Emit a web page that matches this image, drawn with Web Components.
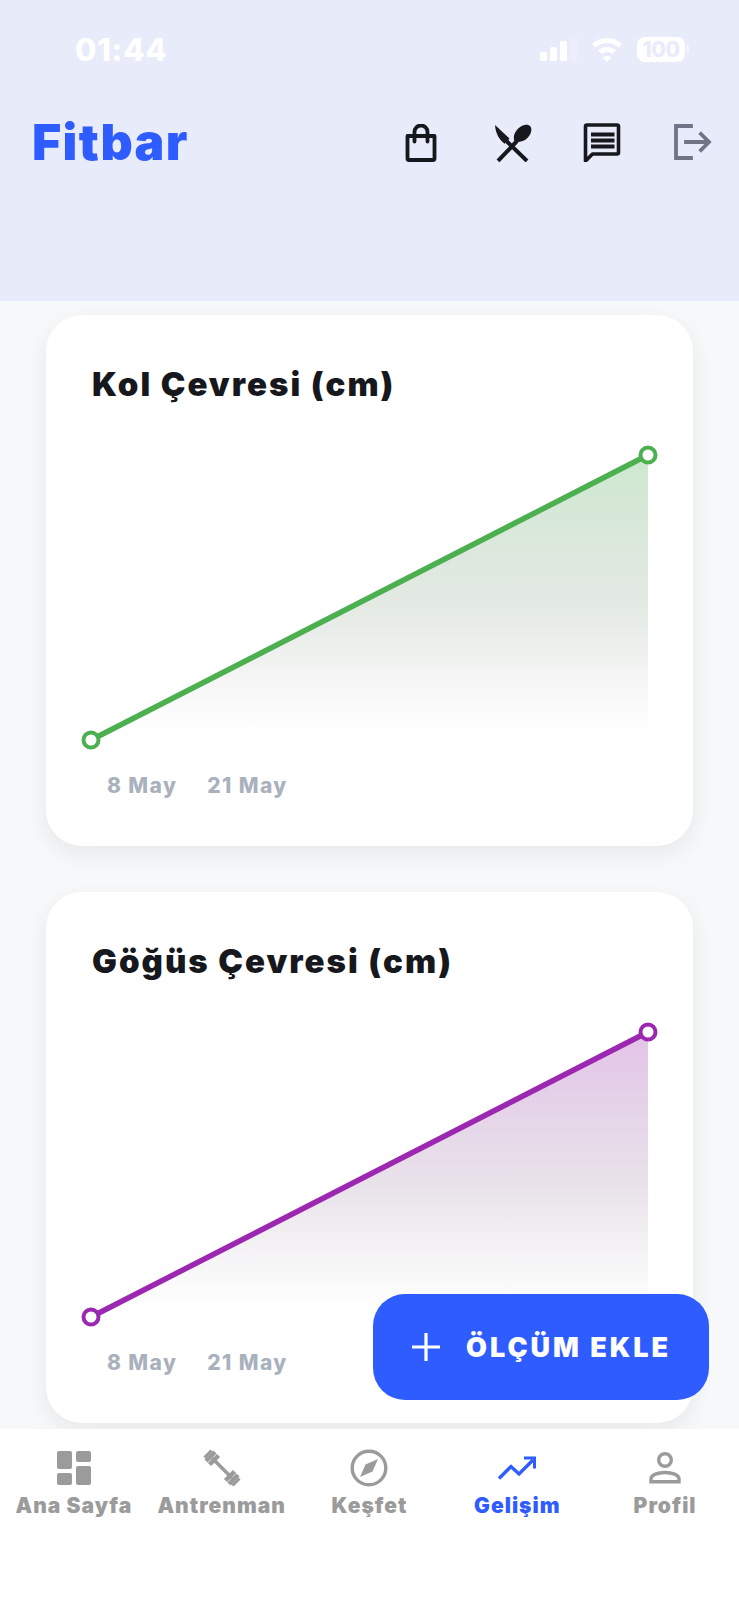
<!DOCTYPE html>
<html lang="tr">
<head>
<meta charset="utf-8">
<title>Fitbar</title>
<style>
  html, body { margin: 0; padding: 0; }
  body { width: 739px; height: 1600px; overflow: hidden; background: #f7f8f9; font-family: Inter, "Liberation Sans", sans-serif; }
</style>
</head>
<body>
<fitbar-app>
  <fitbar-header slot="header"></fitbar-header>
  <chart-card slot="main" baslik="Kol Çevresi (cm)" renk="#4caf50" rgb="76,175,80" gid="g1"></chart-card>
  <chart-card slot="main" baslik="Göğüs Çevresi (cm)" renk="#9c27b0" rgb="156,39,176" gid="g2"></chart-card>
  <add-button slot="fab">ÖLÇÜM EKLE</add-button>
  <bottom-nav slot="nav"></bottom-nav>
</fitbar-app>

<script>
class FitbarApp extends HTMLElement {
  constructor() {
    super();
    this.attachShadow({ mode: 'open' });
  }
  connectedCallback() {
    this.shadowRoot.innerHTML = `
      <style>
        :host { display: flex; flex-direction: column; width: 739px; height: 1600px; position: relative; overflow: hidden; }
        .main { height: 1128px; box-sizing: border-box; padding: 14px 46px 0; display: flex; flex-direction: column; gap: 46px; overflow: hidden; }
        .fab { position: absolute; left: 373px; top: 1294px; }
      </style>
      <slot name="header"></slot>
      <div class="main"><slot name="main"></slot></div>
      <div class="fab"><slot name="fab"></slot></div>
      <slot name="nav"></slot>
    `;
  }
}

class FitbarHeader extends HTMLElement {
  constructor() {
    super();
    this.attachShadow({ mode: 'open' });
  }
  connectedCallback() {
    this.shadowRoot.innerHTML = `
      <style>
        :host { display: block; height: 301px; box-sizing: border-box; background: #e8ebfa; }
        .status { height: 100px; box-sizing: border-box; padding: 30px 54px 0 75px; display: flex; justify-content: space-between; align-items: flex-start; }
        .time { color: #fff; font-weight: 800; font-size: 31px; line-height: 39px; letter-spacing: .7px; }
        .status-icons { display: flex; align-items: center; gap: 14px; height: 39px; }
        .battery { position: relative; width: 48px; height: 25px; border-radius: 8px; background: #fff; color: #e8ebfa; font-weight: 800; font-size: 21px; line-height: 25px; text-align: center; letter-spacing: -.4px; }
        .battery::after { content: ""; position: absolute; right: -4px; top: 8px; width: 2px; height: 8px; border-radius: 0 2px 2px 0; background: rgba(255,255,255,.6); }
        .bar { padding: 0 27px 0 32px; display: flex; align-items: center; justify-content: space-between; }
        .logo { color: #2f5cff; font-weight: 900; font-size: 50px; line-height: 60px; letter-spacing: 1.400px; }
        .icons { display: flex; align-items: center; }
        svg { display: block; }
      </style>
      <div class="status">
        <div class="time">01:44</div>
        <div class="status-icons">
          <svg width="38" height="26" viewBox="0 0 38 26" fill="#fff">
            <rect x="1" y="15" width="7" height="9" rx="1.500"/>
            <rect x="11" y="10" width="7" height="14" rx="1.500"/>
            <rect x="21" y="4" width="7" height="20" rx="1.500"/>
            <rect x="31" y="0" width="7" height="24" rx="1.500" opacity=".2"/>
          </svg>
          <svg width="32" height="26" viewBox="0 0 32 26" fill="#fff">
            <path d="M16 1C10 1 5 3.300 1 7l3.400 3.600C7.500 7.700 11.500 6 16 6s8.500 1.700 11.600 4.600L31 7C27 3.300 22 1 16 1z"/>
            <path d="M16 10c-3.500 0-6.500 1.300-8.800 3.500l3.400 3.500c1.400-1.300 3.300-2.100 5.400-2.100s4 .8 5.400 2.100l3.400-3.500C22.500 11.300 19.500 10 16 10z"/>
            <path d="M16 19c-1.700 0-3.200.6-4.300 1.700L16 25l4.300-4.300C19.200 19.600 17.700 19 16 19z"/>
          </svg>
          <div class="battery">100</div>
        </div>
      </div>
      <div class="bar" style="height:84px">
        <div class="logo">Fitbar</div>
        <div class="icons">
          <svg style="margin-top:4px" width="40" height="40" viewBox="0 0 40 40" fill="none" stroke="#16181d" stroke-width="3.800" stroke-linejoin="round" stroke-linecap="round">
            <path d="M6.500 12h27v22.500a1.500 1.500 0 0 1-1.500 1.500H8a1.500 1.500 0 0 1-1.500-1.500z"/>
            <path d="M13.500 17.500V8a6.500 6.500 0 0 1 13 0v9.500"/>
          </svg>
          <svg style="margin-left:53px;margin-top:2px" width="38" height="38" viewBox="0 0 38 38">
            <path d="M1 1 15.500 14.500l-4.800 5.200C5.500 16 1.500 9.500 1 1z" fill="#16181d"/>
            <path d="M12.500 17 33 37M4 37 23 17" stroke="#16181d" stroke-width="4" fill="none"/>
            <path d="M20.500 17c-1.800-4 0-8.800 3.500-12.300 4.200-4.200 9.500-5.200 12-2.600 2.500 2.500 1.400 8-2.600 12-3.600 3.600-8.800 5-12.900 2.900z" fill="#16181d"/>
          </svg>
          <svg style="margin-left:51px" width="40" height="40" viewBox="0 0 40 40">
            <path d="M4 3h30a1.500 1.500 0 0 1 1.500 1.500v26a1.500 1.500 0 0 1-1.500 1.500H9.500L2.500 39V4.500A1.500 1.500 0 0 1 4 3z" fill="none" stroke="#16181d" stroke-width="3.600" stroke-linejoin="round"/>
            <path d="M8 10.500h23.500v4H8zM8 16.500h23.500v4H8zM8 22.500h23.500v4H8z" fill="#16181d"/>
          </svg>
          <svg style="margin-left:50px" width="39" height="36" viewBox="0 0 39 36" fill="none" stroke="#6f7486" stroke-width="3.800" stroke-linecap="square" stroke-linejoin="miter">
            <path d="M18 2H3v32h15"/>
            <path d="M13 18h22M28 10l8 8-8 8"/>
          </svg>
        </div>
      </div>
    `;
  }
}

class ChartCard extends HTMLElement {
  constructor() {
    super();
    this.attachShadow({ mode: 'open' });
  }
  connectedCallback() {
    const baslik = this.getAttribute('baslik') || '';
    const renk = this.getAttribute('renk') || '#000';
    const rgb = this.getAttribute('rgb') || '0,0,0';
    const gid = this.getAttribute('gid') || 'g';
    const mid = rgb.split(',').map(v => Math.round(v * .35 + 70)).join(',');
    this.shadowRoot.innerHTML = `
      <style>
        :host { display: block; flex: none; height: 531px; border-radius: 36px; background: #fff; box-shadow: 0 8px 22px rgba(30,35,60,.07); }
        h3 { margin: 0; padding: 48px 0 0 46px; color: #16181d; font-weight: 900; font-size: 33px; line-height: 42px; letter-spacing: 2px; }
        svg { display: block; }
        .labels { display: flex; gap: 30px; padding: 17px 0 0 61px; color: #a9b1bd; font-weight: 800; font-size: 21px; line-height: 28px; letter-spacing: 1.400px; }
      </style>
      <h3>${baslik}</h3>
      <svg width="647" height="350" viewBox="0 0 647 350">
        <defs>
          <linearGradient id="${gid}" gradientUnits="userSpaceOnUse" x1="0" y1="50" x2="0" y2="330">
            <stop offset="0" stop-color="rgb(${rgb})" stop-opacity=".28"/>
            <stop offset=".55" stop-color="rgb(${mid})" stop-opacity=".17"/>
            <stop offset="1" stop-color="#808080" stop-opacity="0"/>
          </linearGradient>
        </defs>
        <path d="M45 335 602 50V335z" fill="url(#${gid})"/>
        <path d="M45 335 602 50" stroke="${renk}" stroke-width="5.500" fill="none"/>
        <circle cx="45" cy="335" r="7.500" fill="#fff" stroke="${renk}" stroke-width="4"/>
        <circle cx="602" cy="50" r="7.500" fill="#fff" stroke="${renk}" stroke-width="4"/>
      </svg>
      <div class="labels"><span>8 May</span><span>21 May</span></div>
    `;
  }
}

class AddButton extends HTMLElement {
  constructor() {
    super();
    this.attachShadow({ mode: 'open' });
  }
  connectedCallback() {
    this.shadowRoot.innerHTML = `
      <style>
        :host { display: flex; width: 336px; height: 106px; box-sizing: border-box; padding-left: 39px; gap: 26px; align-items: center; border-radius: 32px; background: #2f5cff; color: #fff; font-weight: 900; font-size: 27px; letter-spacing: 3px; white-space: nowrap; }
        svg { display: block; flex: none; }
      </style>
      <svg width="28" height="28" viewBox="0 0 28 28" stroke="#fff" stroke-width="3.200"><path d="M14 0v28M0 14h28"/></svg>
      <span><slot></slot></span>
    `;
  }
}

class NavItem extends HTMLElement {
  constructor() {
    super();
    this.attachShadow({ mode: 'open' });
  }
  connectedCallback() {
    const aktif = this.hasAttribute('aktif');
    this.shadowRoot.innerHTML = `
      <style>
        :host { display: flex; flex-direction: column; align-items: center; width: 147.800px; padding-top: 20px; color: ${aktif ? '#2f5cff' : '#9b9b9b'}; font-weight: 900; font-size: 21px; letter-spacing: 1px; white-space: nowrap; }
        .ic { height: 38px; display: flex; align-items: center; justify-content: center; }
        .tx { margin-top: 3px; line-height: 32px; }
      </style>
      <div class="ic"><slot name="icon"></slot></div>
      <div class="tx"><slot></slot></div>
    `;
  }
}

class BottomNav extends HTMLElement {
  constructor() {
    super();
    this.attachShadow({ mode: 'open' });
  }
  connectedCallback() {
    this.shadowRoot.innerHTML = `
      <style>
        :host { display: flex; height: 171px; background: #fff; }
        svg { display: block; }
      </style>
      <nav-item>
        <svg slot="icon" width="36" height="36" viewBox="0 0 36 36" fill="#9b9b9b">
          <rect x="1" y="1" width="15" height="18" rx="2"/><rect x="20" y="1" width="15" height="11" rx="2"/>
          <rect x="1" y="23" width="15" height="12" rx="2"/><rect x="20" y="16" width="15" height="19" rx="2"/>
        </svg>
        Ana Sayfa
      </nav-item>
      <nav-item>
        <svg slot="icon" width="38" height="38" viewBox="0 0 38 38" fill="none" stroke="#9b9b9b">
          <path d="M9 9 29 29" stroke-width="3.600"/>
          <path d="M3 12 12 3M6.500 15.500 15.500 6.500" stroke-width="4.500"/>
          <path d="M22.500 31.500 31.500 22.500M26 35 35 26" stroke-width="4.500"/>
          <path d="M1.500 8.500 8.500 1.500M29.500 36.500 36.500 29.500" stroke-width="3"/>
        </svg>
        Antrenman
      </nav-item>
      <nav-item>
        <svg slot="icon" width="38" height="38" viewBox="0 0 38 38">
          <circle cx="19" cy="19" r="16.800" fill="none" stroke="#9b9b9b" stroke-width="3.400"/>
          <path d="M28 10 22.500 22.500 10 28 15.500 15.500z" fill="#9b9b9b"/>
        </svg>
        Keşfet
      </nav-item>
      <nav-item aktif>
        <svg slot="icon" width="38" height="24" viewBox="0 0 38 24" fill="none" stroke="#2f5cff" stroke-width="3.400">
          <path d="M1 22.500 13 10.500 21 18 35 4"/>
          <path d="M26 2h10.500V12.500" stroke-width="3"/>
        </svg>
        Gelişim
      </nav-item>
      <nav-item>
        <svg slot="icon" width="32" height="32" viewBox="0 0 32 32" fill="none" stroke="#9b9b9b" stroke-width="3.400">
          <circle cx="16" cy="8" r="6.300"/>
          <path d="M2 29.800v-3c0-4 7-6.300 14-6.300s14 2.300 14 6.300v3z"/>
        </svg>
        Profil
      </nav-item>
    `;
  }
}

customElements.define('fitbar-app', FitbarApp);
customElements.define('fitbar-header', FitbarHeader);
customElements.define('chart-card', ChartCard);
customElements.define('add-button', AddButton);
customElements.define('nav-item', NavItem);
customElements.define('bottom-nav', BottomNav);
</script>
</body>
</html>
